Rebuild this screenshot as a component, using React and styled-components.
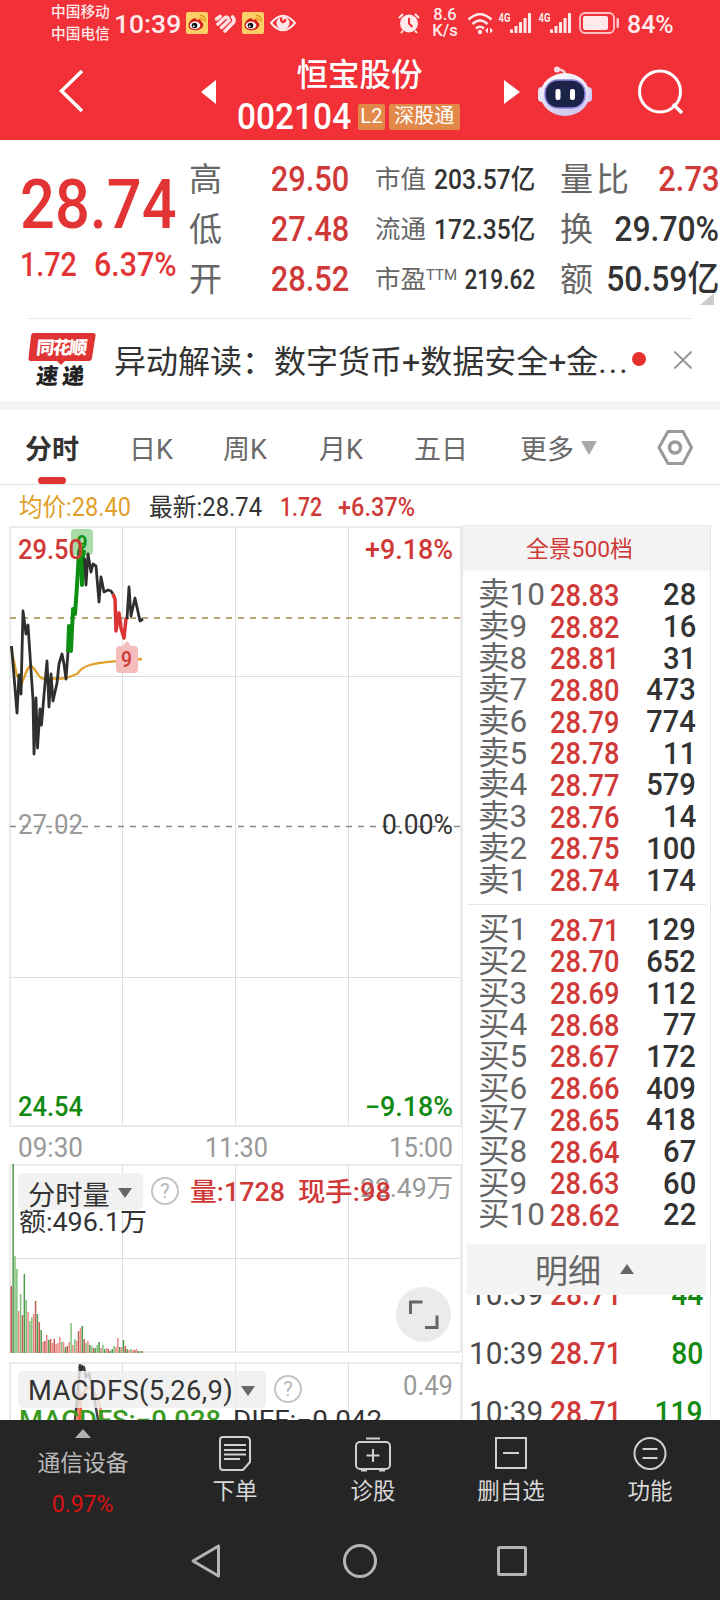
import React from "react";
import styled, { createGlobalStyle } from "styled-components";

const GlobalStyle = createGlobalStyle`
  * {
    box-sizing: border-box;
  }
  body {
    margin: 0;
    background: #fff;
    font-family: Roboto, "Noto Sans CJK SC", sans-serif;
    color: #333;
  }
  svg {
    display: block;
    flex-shrink: 0;
  }
`;

const RED = "#cf3a38";
const GREEN = "#138a13";

const Screen = styled.div`
  width: 720px;
  height: 1600px;
  overflow: hidden;
  display: flex;
  flex-direction: column;
  white-space: nowrap;
`;

// narrow digits, squeezed from the side given by $from
const Num = styled.span`
  display: inline-block;
  font-size: ${(p) => p.$size || 31}px;
  font-weight: ${(p) => p.$weight || 500};
  color: ${(p) => p.$color || "inherit"};
  transform: scaleX(${(p) => p.$squeeze || 0.88});
  transform-origin: ${(p) => p.$from || "left"} center;
`;

/* ---------- header ---------- */

const Header = styled.header`
  height: 140px;
  background: #f13037;
  color: #fff;
`;

const StatusBar = styled.div`
  height: 46px;
  display: flex;
  align-items: center;
  padding-left: 51px;
  color: #ffe9ea;
`;

const Carriers = styled.div`
  width: 63px;
  font-size: 14.7px;
  font-weight: 500;
  line-height: 22px;
  padding-bottom: 1px;
`;

const Clock = styled.div`
  width: 72px;
  font-size: 26.5px;
  font-weight: 500;
  line-height: 46px;
  padding-top: 1px;
`;

const StatusIcons = styled.div`
  display: flex;
  align-items: center;
  gap: 6px;
  width: 212px;
`;

const Speed = styled.div`
  width: 34px;
  font-size: 16.5px;
  font-weight: 500;
  line-height: 16px;
  text-align: center;
  margin-left: 8px;
`;

const Signals = styled.div`
  margin-left: 5px;
`;

const Battery = styled.div`
  margin-left: 6px;
  display: flex;
  align-items: center;
  gap: 7px;
`;

const NavBar = styled.div`
  height: 94px;
  display: grid;
  grid-template-columns: 198px 39px 227px 39px 217px;
`;

const NavCell = styled.div`
  display: flex;
  align-items: flex-start;
`;

const StockTitle = styled.div`
  display: flex;
  flex-direction: column;
  align-items: center;
`;

const StockName = styled.h1`
  margin: 10px 0 0;
  padding-left: 18px;
  font-size: 31.5px;
  font-weight: 500;
  line-height: 40px;
`;

const CodeRow = styled.div`
  width: 227px;
  height: 36px;
  margin-top: 3px;
  display: flex;
  align-items: center;
`;

const Code = styled.div`
  width: 121px;
  font-size: 36px;
  line-height: 36px;
`;

const Badge = styled.span`
  width: ${(p) => p.$width}px;
  height: 26px;
  margin-right: 4px;
  border-radius: 2px;
  background: #e2894a;
  font-size: 20px;
  line-height: 25px;
  text-align: center;
`;

/* ---------- quote ---------- */

const Quote = styled.section`
  position: relative;
  height: 178px;
  display: flex;
  padding-top: 14px;
`;

const LastPrice = styled.div`
  width: 189px;
  padding-left: 20px;
  color: #e23434;
`;

const BigPrice = styled.div`
  height: 76px;
  line-height: 76px;
  padding-top: 13px;
`;

const Change = styled.div`
  display: flex;
  height: 48px;
  line-height: 48px;
  margin-top: 11px;
`;

const ChangeCell = styled.div`
  width: 74px;
`;

const QuoteColumn = styled.div`
  width: ${(p) => p.$width}px;
  margin-right: ${(p) => p.$gap || 0}px;
`;

const QuoteRow = styled.div`
  height: 50px;
  display: flex;
  justify-content: space-between;
  align-items: center;
`;

const QuoteLabel = styled.span`
  color: #666;
  font-size: ${(p) => p.$size}px;
  letter-spacing: ${(p) => p.$spacing || 0}px;
  line-height: 46px;
  padding-bottom: 4px;
  font-family: "Noto Sans CJK SC", sans-serif;
`;

const Sup = styled.sup`
  font: 15px/1 Roboto, sans-serif;
  vertical-align: 8px;
`;

const QuoteValue = styled(Num)`
  margin-left: -30px;
  line-height: 50px;
  padding-top: 1px;
`;

const MoreCorner = styled.i`
  position: absolute;
  left: 700px;
  top: 153px;
  border-left: 14px solid transparent;
  border-bottom: 12px solid #ccc;
`;

/* ---------- news ---------- */

const News = styled.section`
  height: 83px;
  margin: 0 28px;
  border-top: 1px solid #e9e9e9;
  display: flex;
  align-items: center;
`;

const NewsLogo = styled.div`
  width: 86px;
  height: 56px;
`;

const NewsText = styled.div`
  width: 518px;
  font-size: 32px;
  line-height: 48px;
  padding-top: 3px;
`;

const Dots = styled.span`
  letter-spacing: 2px;
`;

const RedDot = styled.i`
  width: 14px;
  height: 14px;
  border-radius: 50%;
  background: #e63030;
  margin-right: 28px;
  margin-top: -2px;
`;

const Band = styled.div`
  height: 9px;
  background: #f4f4f4;
`;

/* ---------- tabs ---------- */

const Tabs = styled.nav`
  height: 75px;
  border-bottom: 1px solid #e2e2e2;
  display: grid;
  grid-template-columns: 104px 94px 96px 95px 106px 136px 1fr;
  padding-left: 25px;
`;

const Tab = styled.div`
  position: relative;
  display: flex;
  align-items: center;
  gap: 7px;
  height: 75px;
  font-size: 27px;
  font-weight: ${(p) => (p.$active ? 700 : 400)};
  color: ${(p) => (p.$active ? "#333" : "#6a6a6a")};

  &::after {
    content: "";
    display: ${(p) => (p.$active ? "block" : "none")};
    position: absolute;
    left: 13px;
    bottom: 1px;
    width: 28px;
    height: 7px;
    border-radius: 4px;
    background: #e03434;
  }
`;

const Down = styled.i`
  border: ${(p) => p.$w}px solid transparent;
  border-top: ${(p) => p.$h}px solid ${(p) => p.$color};
  border-bottom: 0;
`;

const Up = styled.i`
  border: ${(p) => p.$w}px solid transparent;
  border-bottom: ${(p) => p.$h}px solid ${(p) => p.$color};
  border-top: 0;
`;

/* ---------- main area ---------- */

const Legend = styled.div`
  height: 40px;
  padding-left: 19px;
`;

const Main = styled.main`
  height: 895px;
  display: flex;
`;

const Charts = styled.div`
  width: 462px;
  padding-top: 1px;
`;

const Panel = styled.div`
  position: relative;
  margin-bottom: ${(p) => p.$gap || 0}px;
`;

const Chip = styled.div`
  position: absolute;
  left: 18px;
  top: 9px;
  width: ${(p) => p.$width}px;
  height: 37px;
  padding: 2px 11px 0 10px;
  border-radius: 5px;
  background: rgba(238, 238, 238, 0.8);
  display: flex;
  align-items: center;
  justify-content: space-between;
  font-size: 27.3px;
  letter-spacing: ${(p) => p.$spacing || 0}px;
`;

const Expand = styled.div`
  position: absolute;
  left: 396px;
  top: 123px;
  width: 55px;
  height: 55px;
  border-radius: 50%;
  background: #ebebeb;
`;

const Book = styled.aside`
  width: 249px;
  border: 1px solid #e8e8e8;
  border-bottom: 0;
  display: flex;
  flex-direction: column;
`;

const BookHead = styled.div`
  height: 45px;
  background: #f4f4f4;
  color: ${RED};
  font-size: 22.8px;
  line-height: 47px;
  padding-left: 63px;
`;

const Levels = styled.div`
  padding: ${(p) => p.$pad};
`;

const Level = styled.div`
  height: 31.7px;
  display: flex;
  align-items: center;
  padding-left: 15px;
  line-height: 32px;
`;

const LevelName = styled.span`
  width: 72px;
  padding-top: 6px;
`;

const Price = styled.span`
  width: 76px;
  padding-top: ${(p) => p.$drop || 0}px;
`;

const Volume = styled.span`
  width: 70px;
  padding-top: 6px;
  text-align: right;
`;

const BookRule = styled.div`
  height: 1px;
  margin: 0 4px;
  background: #e8e8e8;
`;

const DetailBar = styled.div`
  height: 51px;
  flex-shrink: 0;
  margin: 0 4px;
  background: #f4f4f4;
  color: #666;
  font-size: 33px;
  display: flex;
  align-items: center;
  padding-left: 68px;
  gap: 19px;
`;

const Trades = styled.div`
  height: 125px;
  overflow: hidden;
`;

const Trade = styled.div`
  height: 59px;
  line-height: 59px;
  display: flex;
  padding-left: 6px;
  position: relative;
  top: -30px;
`;

const TradeTime = styled.span`
  width: 81px;
  color: #4a4a4a;
`;

const TradeVolume = styled.span`
  width: 77px;
  text-align: right;
`;

/* ---------- bottom ---------- */

const Footer = styled.footer`
  height: 180px;
  background: #252525;
  color: #d8d8d8;
`;

const Actions = styled.div`
  height: 110px;
  display: grid;
  grid-template-columns: 166px 138px 138px 138px 140px;
`;

const Action = styled.div`
  display: flex;
  flex-direction: column;
  align-items: center;
  padding-top: 13px;
  font-size: 22.5px;
  line-height: 32px;

  svg {
    margin-bottom: 2px;
  }
`;

const Sector = styled.div`
  display: flex;
  flex-direction: column;
  align-items: center;
  padding-top: 9px;
  font-size: 22.8px;
  line-height: 40px;
  color: #b9b9b9;
`;

const SectorName = styled.div`
  margin-top: 6px;
`;

const SectorRate = styled.div`
  color: #d81313;
`;

const SystemKeys = styled.div`
  height: 70px;
`;

/* ---------- data ---------- */

const asks = [
  ["卖10", "28.83", 28], ["卖9", "28.82", 16], ["卖8", "28.81", 31], ["卖7", "28.80", 473],
  ["卖6", "28.79", 774], ["卖5", "28.78", 11], ["卖4", "28.77", 579], ["卖3", "28.76", 14],
  ["卖2", "28.75", 100], ["卖1", "28.74", 174],
];

const bids = [
  ["买1", "28.71", 129], ["买2", "28.70", 652], ["买3", "28.69", 112], ["买4", "28.68", 77],
  ["买5", "28.67", 172], ["买6", "28.66", 409], ["买7", "28.65", 418], ["买8", "28.64", 67],
  ["买9", "28.63", 60], ["买10", "28.62", 22],
];

const trades = [["10:39", "28.71", 44], ["10:39", "28.71", 80], ["10:39", "28.71", 119]];

// height in px and direction of every one-minute bar
const volumes = [
  [67, "r"], [189, "g"], [97, "G"], [84, "G"], [42, "R"], [59, "G"], [38, "r"], [79, "g"],
  [53, "G"], [41, "R"], [32, "G"], [36, "G"], [39, "R"], [52, "r"], [39, "g"], [31, "r"],
  [23, "g"], [11, "R"], [12, "r"], [18, "R"], [13, "g"], [14, "r"], [10, "R"], [14, "r"],
  [9, "R"], [10, "R"], [16, "R"], [11, "G"], [11, "R"], [6, "g"], [7, "r"], [11, "R"],
  [30, "G"], [8, "R"], [14, "G"], [12, "R"], [22, "r"], [25, "R"], [27, "g"], [14, "r"],
  [10, "G"], [12, "R"], [8, "g"], [7, "G"], [5, "r"], [5, "g"], [8, "G"], [11, "g"],
  [5, "R"], [8, "G"], [4, "g"], [5, "R"], [4, "r"], [2, "g"], [4, "g"], [7, "G"],
  [6, "R"], [15, "R"], [6, "g"], [6, "R"], [13, "g"], [7, "r"], [4, "g"], [3, "R"],
  [4, "G"], [3, "R"], [3, "r"], [4, "R"], [2, "g"], [2, "G"], [2, "r"],
];

const barColors = { r: "#c45a50", R: "#ef8a88", g: "#4f9a4c", G: "#7fc07a" };

/* ---------- pieces ---------- */

function Label({ x, y, w, size = 27, color, end, weight = 500, children }) {
  return (
    <text
      x={x}
      y={y}
      fontSize={size}
      fontWeight={weight}
      fill={color}
      textLength={w}
      lengthAdjust="spacingAndGlyphs"
      textAnchor={end ? "end" : "start"}
    >
      {children}
    </text>
  );
}

function Grid({ height, rows }) {
  return (
    <g fill="none" shapeRendering="crispEdges">
      <path d={`M122.5 0V${height}M235.5 0V${height}M348.5 0V${height}`} stroke="#dedede" />
      {rows.map((y) => (
        <path key={y} d={`M10 ${y}H461`} stroke="#dedede" />
      ))}
      <rect x="10" y="0" width="451" height={height} stroke="#ebebeb" strokeWidth="2" />
    </g>
  );
}

function WeiboIcon() {
  return (
    <svg width="22" height="22" viewBox="0 0 22 22">
      <rect width="22" height="22" rx="2" fill="#fbd067" />
      <path d="M2.500 13C3 9 7 5.500 9.500 6.300C11 6.800 10.200 8 10.800 8C12.500 7.500 15 7.200 15 9C15 10 16.800 10.300 17.300 12C18 16 13 18.500 9 18.300C5 18 2.200 16 2.500 13Z" fill="#d5201c" />
      <ellipse cx="9" cy="13.300" rx="5.200" ry="3.700" fill="#fff" />
      <circle cx="8.500" cy="13.500" r="2.800" fill="#111" />
      <circle cx="7.700" cy="14.200" r="0.900" fill="#fff" />
      <path d="M13.500 3.500C17.500 3 20 6 18.800 9.500M13.700 6.300C15.500 6 17 7.300 16.200 9" fill="none" stroke="#e8951c" strokeWidth="1.500" />
    </svg>
  );
}

function HeartIcon() {
  return (
    <svg width="22" height="22" viewBox="0 0 22 22" fill="none" stroke="#ffdfe1" strokeWidth="3.600" strokeLinecap="round">
      <path d="M2.500 7L6 4.500M4 12L10.500 6Q12.500 4 14 6M7.500 15.500L15 8.500M11 19L19.500 10.500Q21 7.500 18.500 5" />
    </svg>
  );
}

function EyeIcon() {
  return (
    <svg width="26" height="22" viewBox="0 0 26 22" fill="none" stroke="#ffe9ea" strokeWidth="2">
      <path d="M1 11Q13-3.500 25 11Q13 25.500 1 11Z" />
      <circle cx="13" cy="11" r="6.500" fill="#ffe9ea" stroke="none" />
      <path d="M11.500 5.500Q10 9 13 10Q15.500 9.500 15 7" stroke="#f13037" strokeWidth="2.500" />
    </svg>
  );
}

function AlarmIcon() {
  return (
    <svg width="22" height="22" viewBox="0 0 22 22">
      <circle cx="11" cy="11.500" r="9" fill="#ffe9ea" />
      <path d="M1 6L5 2M17 2L21 6M5 18.500L3 21M17 18.500L19 21" stroke="#ffe9ea" strokeWidth="2" />
      <path d="M11 6V11.500L14.500 15" stroke="#f13037" strokeWidth="2" fill="none" />
    </svg>
  );
}

function SignalIcons() {
  return (
    <svg width="106" height="24" viewBox="467 10 106 24" fill="none" stroke="#ffe9ea">
      <g strokeWidth="2.600">
        <path d="M468.500 18.500Q480 8 491.500 18.500M472.500 23Q480 16 487.500 23M476 27.500Q480 24 484 27.500" />
        <circle cx="480" cy="31" r="1.200" strokeWidth="2" />
      </g>
      <path d="M485 29.500L488 26.500V32.500ZM490 26.500V32.500L493 29.500Z" fill="#ffe9ea" stroke="none" />
      {[0, 40].map((dx) => (
        <g key={dx} transform={`translate(${dx} 0)`}>
          <text x="498.500" y="21" fontSize="12" fontWeight="700" fill="#ffe9ea" stroke="none" textLength="12" lengthAdjust="spacingAndGlyphs">4G</text>
          <path d="M511.500 28.500V32M516 25V32M520.500 21V32M525 17V32M529.500 12V32" strokeWidth="3" />
        </g>
      ))}
    </svg>
  );
}

function BatteryIcon() {
  return (
    <svg width="41" height="24" viewBox="0 0 41 24">
      <rect x="1" y="2" width="34" height="20" rx="5" fill="none" stroke="#ffc5c7" strokeWidth="1.800" />
      <rect x="4" y="5" width="25" height="14" rx="2" fill="#ffe9ea" />
      <rect x="37.500" y="7" width="2.500" height="10" rx="1" fill="#ffc5c7" />
    </svg>
  );
}

function Robot() {
  return (
    <svg width="54" height="52" viewBox="0 0 54 52">
      <defs>
        <linearGradient id="shell" x1="0" y1="0" x2="0.300" y2="1">
          <stop offset="0" stopColor="#ffffff" />
          <stop offset="0.600" stopColor="#e4e2f6" />
          <stop offset="1" stopColor="#d4cbf1" />
        </linearGradient>
      </defs>
      <path d="M27 9Q27 3 18 3.500" fill="none" stroke="#f0c6d6" strokeWidth="2.500" />
      <circle cx="19" cy="3.500" r="3" fill="#f7dbe6" />
      <rect x="0" y="21" width="9" height="15" rx="4" fill="#e9e4f6" />
      <rect x="45" y="21" width="9" height="15" rx="4" fill="#cfd0f4" />
      <ellipse cx="27" cy="28.500" rx="24.500" ry="21.500" fill="url(#shell)" />
      <rect x="7" y="14" width="40" height="28" rx="13" fill="#1c2348" stroke="#8d83dc" strokeWidth="1.500" />
      <rect x="17.500" y="23" width="5" height="11" rx="2" fill="#fff" />
      <rect x="32" y="23" width="5" height="11" rx="2" fill="#fff" />
    </svg>
  );
}

function HelpIcon({ cx, cy }) {
  return (
    <g>
      <circle cx={cx} cy={cy} r="13" fill="#fff" stroke="#c4c4c4" strokeWidth="2" />
      <text x={cx} y={cy + 7} fontSize="20" fill="#b8b8b8" textAnchor="middle">?</text>
    </g>
  );
}

function PriceChart() {
  return (
    <svg width="462" height="601" viewBox="0 526 462 601">
      <g transform="translate(0 527)">
        <Grid height={599} rows={[149.5, 450.5]} />
      </g>
      <path d="M10 826.500H461" stroke="#8a8a8a" strokeWidth="1.500" strokeDasharray="6 6" />
      <path d="M10 618H461" stroke="#b9a67c" strokeWidth="2" strokeDasharray="6 6" />
      <path
        d="M11 647L17 676L22 683C26 672 28 666 31 666S38 677 42 678.500L62 678.500C70 678 73 675 77 674C81 669 83 667 90 665C100 661.500 110 662 142 659"
        fill="none"
        stroke="#dfa02c"
        strokeWidth="2.300"
      />
      <rect x="71" y="529" width="22" height="26" rx="4" fill="#a9dca7" />
      <path d="M127 641L131 646H134Q138 646 138 650V669Q138 673 134 673H120Q116 673 116 669V650Q116 646 120 646H123Z" fill="#f5bcbc" />
      <g fill="none" strokeWidth="2.800" strokeLinejoin="round">
        <path
          stroke="#2f2f2f"
          d="M11.500 646L14 676L17 713L19 675L21 694L23 611L26 634L28 625L31 670L33 700L34 754L36 698L37.500 748L40 709L41.500 725L44 695L47 661L49 707L51 674L53 701L57 683L59 664L62 654L64 664L66 679L68 652"
        />
        <path stroke="#0d8f14" strokeWidth="4" d="M68 652L69 626L71 651L73 609L75 614L77 586L79 552L81 547L82 585L83 558L84 550" />
        <path
          stroke="#2f2f2f"
          d="M84.500 558L86 585L88 554L91 572L93 564L96 566L99 602L101 577L104 592L108 590L111 591L113 594"
        />
        <path stroke="#dc3535" strokeWidth="3.500" d="M113 594L115 599L116 631L119 613L121 628L124 638L126 619L128 617" />
        <path stroke="#2f2f2f" d="M127 619L129 587L131 616L135 598L140 621L143 619" />
      </g>
      <Label x={76.5} y={550} w={11} size={21} color="#0d8f14" weight={700}>9</Label>
      <Label x={121} y={667} w={11} size={22} color={RED}>9</Label>
      <Label x={18} y={559} w={65} color={RED}>29.50</Label>
      <Label x={453} y={559} w={88} end color={RED}>+9.18%</Label>
      <Label x={18} y={834} w={65} color="#999" weight={400}>27.02</Label>
      <Label x={453} y={834} w={71} end color="#333" weight={400}>0.00%</Label>
      <Label x={18} y={1116} w={65} color={GREEN}>24.54</Label>
      <Label x={453} y={1116} w={88} end color={GREEN}>−9.18%</Label>
    </svg>
  );
}

function TimeAxis() {
  return (
    <svg width="462" height="37" viewBox="0 1127 462 37">
      <Label x={18} y={1157} w={65} color="#999" weight={400}>09:30</Label>
      <Label x={205} y={1157} w={63} color="#999" weight={400}>11:30</Label>
      <Label x={453} y={1157} w={64} end color="#999" weight={400}>15:00</Label>
    </svg>
  );
}

function VolumeChart() {
  return (
    <svg width="462" height="190" viewBox="0 1164 462 190">
      <g transform="translate(0 1165)">
        <Grid height={187} rows={[93.5]} />
      </g>
      {volumes.map(([h, kind], i) => (
        <rect key={i} x={10.500 + i * 1.870} y={1353 - h} width="1.500" height={h} fill={barColors[kind]} />
      ))}
      <HelpIcon cx={165} cy={1191} />
      <Label x={453} y={1197} w={93} size={26} end color="#999" weight={400}>22.49万</Label>
      <Label x={190} y={1201} w={95} size={26} color={RED}>量:1728</Label>
      <Label x={298} y={1201} w={93} size={26} color={RED}>现手:98</Label>
      <Label x={19} y={1231} w={128} size={26} color="#333" weight={400}>额:496.1万</Label>
    </svg>
  );
}

function MacdChart() {
  return (
    <svg width="462" height="58" viewBox="0 1362 462 58">
      <g transform="translate(0 1363)">
        <Grid height={90} rows={[]} />
      </g>
      <path d="M76 1420V1408L80 1385L83 1420Z" fill="#ec5a3c" />
      <path d="M80 1364V1371L84 1368L86 1377L89 1374L93 1390L98 1420M80 1367L75 1420" fill="none" stroke="#444" strokeWidth="2.500" />
      <path d="M79 1369L84 1367" stroke="#333" strokeWidth="5" />
      <path d="M77 1420C82 1380 94 1374 103 1420" fill="none" stroke="#ee8a62" strokeWidth="2.500" />
      <HelpIcon cx={288} cy={1389} />
      <Label x={453} y={1395} w={50} end color="#999" weight={400}>0.49</Label>
      <Label x={19} y={1429} w={202} size={26} color="#3a9a1e">MACDFS:−0.028</Label>
      <Label x={233} y={1429} w={149} size={26} color="#333" weight={400}>DIFF:−0.042</Label>
    </svg>
  );
}

function LevelRows({ rows }) {
  return rows.map(([name, price, volume]) => (
    <Level key={name}>
      <LevelName><Num $size={31.5} $weight={400} $squeeze={1} $color="#666">{name}</Num></LevelName>
      <Price $drop={7}><Num $color={RED}>{price}</Num></Price>
      <Volume><Num $from="right" $squeeze={0.94}>{volume}</Num></Volume>
    </Level>
  ));
}

function App() {
  return (
    <Screen>
      <GlobalStyle />
      <Header>
        <StatusBar>
          <Carriers>
            <div>中国移动</div>
            <div>中国电信</div>
          </Carriers>
          <Clock>10:39</Clock>
          <StatusIcons>
            <WeiboIcon />
            <HeartIcon />
            <WeiboIcon />
            <EyeIcon />
          </StatusIcons>
          <AlarmIcon />
          <Speed>
            <div>8.6</div>
            <div>K/s</div>
          </Speed>
          <Signals><SignalIcons /></Signals>
          <Battery>
            <BatteryIcon />
            <Num $size={26.5} $squeeze={0.94}>84%</Num>
          </Battery>
        </StatusBar>
        <NavBar>
          <NavCell>
            <svg width="198" height="94" viewBox="0 46 198 94">
              <path d="M82 71L61.500 91L82 111" fill="none" stroke="#fff" strokeWidth="3.500" />
            </svg>
          </NavCell>
          <NavCell>
            <svg width="39" height="94" viewBox="198 46 39 94">
              <path d="M201 92L216 80V104Z" fill="#fff" />
            </svg>
          </NavCell>
          <StockTitle>
            <StockName>恒宝股份</StockName>
            <CodeRow>
              <Code><Num $size={36} $squeeze={0.93}>002104</Num></Code>
              <Badge $width={27}>L2</Badge>
              <Badge $width={72}>深股通</Badge>
            </CodeRow>
          </StockTitle>
          <NavCell>
            <svg width="39" height="94" viewBox="464 46 39 94" overflow="visible">
              <path d="M520 92L504 80V104Z" fill="#fff" />
            </svg>
          </NavCell>
          <NavCell>
            <svg width="217" height="94" viewBox="503 46 217 94">
              <g transform="translate(538 66)"><Robot /></g>
              <circle cx="660" cy="91.500" r="20.500" fill="none" stroke="#fff" strokeWidth="3" />
              <path d="M673 104L682 113" stroke="#fff" strokeWidth="3.500" />
            </svg>
          </NavCell>
        </NavBar>
      </Header>

      <Quote>
        <LastPrice>
          <BigPrice><Num $size={69} $squeeze={0.89}>28.74</Num></BigPrice>
          <Change>
            <ChangeCell><Num $size={33} $squeeze={0.87}>1.72</Num></ChangeCell>
            <ChangeCell><Num $size={33} $squeeze={0.92}>6.37%</Num></ChangeCell>
          </Change>
        </LastPrice>
        <QuoteColumn $width={160} $gap={26}>
          <QuoteRow><QuoteLabel $size={33}>高</QuoteLabel><QuoteValue $from="right" $size={35} $color={RED}>29.50</QuoteValue></QuoteRow>
          <QuoteRow><QuoteLabel $size={33}>低</QuoteLabel><QuoteValue $from="right" $size={35} $color={RED}>27.48</QuoteValue></QuoteRow>
          <QuoteRow><QuoteLabel $size={33}>开</QuoteLabel><QuoteValue $from="right" $size={35} $color={RED}>28.52</QuoteValue></QuoteRow>
        </QuoteColumn>
        <QuoteColumn $width={160} $gap={25}>
          <QuoteRow><QuoteLabel $size={25.500}>市值</QuoteLabel><QuoteValue $from="right" $size={27} $squeeze={0.91}>203.57亿</QuoteValue></QuoteRow>
          <QuoteRow><QuoteLabel $size={25.500}>流通</QuoteLabel><QuoteValue $from="right" $size={27} $squeeze={0.91}>172.35亿</QuoteValue></QuoteRow>
          <QuoteRow><QuoteLabel $size={25.500}>市盈<Sup>TTM</Sup></QuoteLabel><QuoteValue $from="right" $size={27} $squeeze={0.84}>219.62</QuoteValue></QuoteRow>
        </QuoteColumn>
        <QuoteColumn $width={159}>
          <QuoteRow><QuoteLabel $size={33} $spacing={3}>量比</QuoteLabel><QuoteValue $from="right" $size={35} $color={RED}>2.73</QuoteValue></QuoteRow>
          <QuoteRow><QuoteLabel $size={33}>换</QuoteLabel><QuoteValue $from="right" $size={35} $squeeze={0.91}>29.70%</QuoteValue></QuoteRow>
          <QuoteRow><QuoteLabel $size={33}>额</QuoteLabel><QuoteValue $from="right" $size={35} $squeeze={0.91}>50.59亿</QuoteValue></QuoteRow>
        </QuoteColumn>
        <MoreCorner />
      </Quote>

      <News>
        <NewsLogo>
          <svg width="68" height="56" viewBox="0 0 68 56">
            <path d="M5 1H65Q68 1 67.500 4L64 26Q63.500 29 61 29H37L33 33L29 29H3Q0 29 0.500 26L3 4Q3.500 1 5 1Z" fill="#e03434" />
            <g transform="skewX(-6)" fontWeight="900" fontFamily="Noto Sans CJK SC">
              <text x="10" y="22" fontSize="18" fill="#fff" textLength="51">同花顺</text>
              <text x="13" y="52" fontSize="22" fill="#222" textLength="48">速递</text>
            </g>
          </svg>
        </NewsLogo>
        <NewsText>异动解读：数字货币+数据安全+金<Dots>...</Dots></NewsText>
        <RedDot />
        <svg width="18" height="18" viewBox="0 0 18 18">
          <path d="M0.500 0.500L17.500 17.500M17.500 0.500L0.500 17.500" stroke="#999" strokeWidth="2" />
        </svg>
      </News>
      <Band />

      <Tabs>
        <Tab $active>分时</Tab>
        <Tab>日K</Tab>
        <Tab>周K</Tab>
        <Tab>月K</Tab>
        <Tab>五日</Tab>
        <Tab>更多<Down $w={8.500} $h={14} $color="#a9a9a9" /></Tab>
        <Tab>
          <svg width="38" height="38" viewBox="0 0 38 38" fill="none" stroke="#999">
            <path d="M12 2.500H27L35.500 18.500L27 34.500H12L3 18.500Z" strokeWidth="3" strokeLinejoin="round" />
            <circle cx="19" cy="18.500" r="5.500" strokeWidth="3.500" />
          </svg>
        </Tab>
      </Tabs>

      <Legend>
        <svg width="450" height="40" viewBox="19 485 450 40">
          <Label x={19} y={516} w={112} size={25} color="#dfa02c" weight={400}>均价:28.40</Label>
          <Label x={149} y={516} w={113} size={25} color="#333" weight={400}>最新:28.74</Label>
          <Label x={280} y={516} w={42} size={25} color={RED}>1.72</Label>
          <Label x={338} y={516} w={77} size={25} color={RED}>+6.37%</Label>
        </svg>
      </Legend>

      <Main>
        <Charts>
          <Panel><PriceChart /></Panel>
          <Panel><TimeAxis /></Panel>
          <Panel $gap={8}>
            <VolumeChart />
            <Chip $width={125}>分时量<Down $w={7} $h={10} $color="#666" /></Chip>
            <Expand>
              <svg width="55" height="55" viewBox="0 0 55 55" fill="none" stroke="#666" strokeWidth="3">
                <path d="M14.500 27V15H26.500M29 40.500H41V28.500" />
              </svg>
            </Expand>
          </Panel>
          <Panel>
            <MacdChart />
            <Chip $width={248} $spacing={0.4}>MACDFS(5,26,9)<Down $w={7} $h={10} $color="#666" /></Chip>
          </Panel>
        </Charts>
        <Book>
          <BookHead>全景500档</BookHead>
          <Levels $pad="8px 0 8px"><LevelRows rows={asks} /></Levels>
          <BookRule />
          <Levels $pad="9px 0 13px"><LevelRows rows={bids} /></Levels>
          <DetailBar>明细<Up $w={7} $h={10} $color="#666" /></DetailBar>
          <Trades>
            {trades.map(([time, price, volume]) => (
              <Trade key={volume}>
                <TradeTime><Num $size={32} $weight={400} $squeeze={0.93}>{time}</Num></TradeTime>
                <Price><Num $size={32} $color={RED}>{price}</Num></Price>
                <TradeVolume><Num $size={32} $from="right" $color={GREEN}>{volume}</Num></TradeVolume>
              </Trade>
            ))}
          </Trades>
        </Book>
      </Main>

      <Footer>
        <Actions>
          <Sector>
            <Up $w={8.500} $h={9} $color="#b0b0b0" />
            <SectorName>通信设备</SectorName>
            <SectorRate><Num $size={23.500} $weight={400} $squeeze={0.98} $from="center">0.97%</Num></SectorRate>
          </Sector>
          <Action>
            <svg width="36" height="40" viewBox="0 0 36 40" fill="none" stroke="#d0d0d0" strokeWidth="2">
              <path d="M6 4H29Q33 4 33 8V29L26 37H6Q3 37 3 34V7Q3 4 6 4ZM7 12H29M7 17H29M7 21.500H29M7 26H23" />
            </svg>
            下单
          </Action>
          <Action>
            <svg width="38" height="40" viewBox="0 0 38 40" fill="none" stroke="#d0d0d0" strokeWidth="2">
              <rect x="2" y="9" width="34" height="27" rx="4" />
              <path d="M12 5.500H26M19 16V29M12.500 22.500H25.500M7 37.500H13M25 37.500H31" />
            </svg>
            诊股
          </Action>
          <Action>
            <svg width="36" height="40" viewBox="0 0 36 40" fill="none" stroke="#d0d0d0" strokeWidth="2">
              <rect x="3" y="5" width="30" height="30" />
              <path d="M10 20H26" />
            </svg>
            删自选
          </Action>
          <Action>
            <svg width="36" height="40" viewBox="0 0 36 40" fill="none" stroke="#d0d0d0" strokeWidth="2">
              <circle cx="18" cy="20.500" r="15.500" />
              <path d="M10.500 16H25.500M10.500 25H25.500" />
            </svg>
            功能
          </Action>
        </Actions>
        <SystemKeys>
          <svg width="720" height="70" viewBox="0 1530 720 70" fill="none" stroke="#b4b4b4" strokeWidth="3" strokeLinejoin="round">
            <path d="M218.500 1546V1576L193 1561Z" />
            <circle cx="360" cy="1561" r="15.500" />
            <rect x="498.500" y="1547.500" width="27" height="27" rx="1" />
          </svg>
        </SystemKeys>
      </Footer>
    </Screen>
  );
}

export default App;
